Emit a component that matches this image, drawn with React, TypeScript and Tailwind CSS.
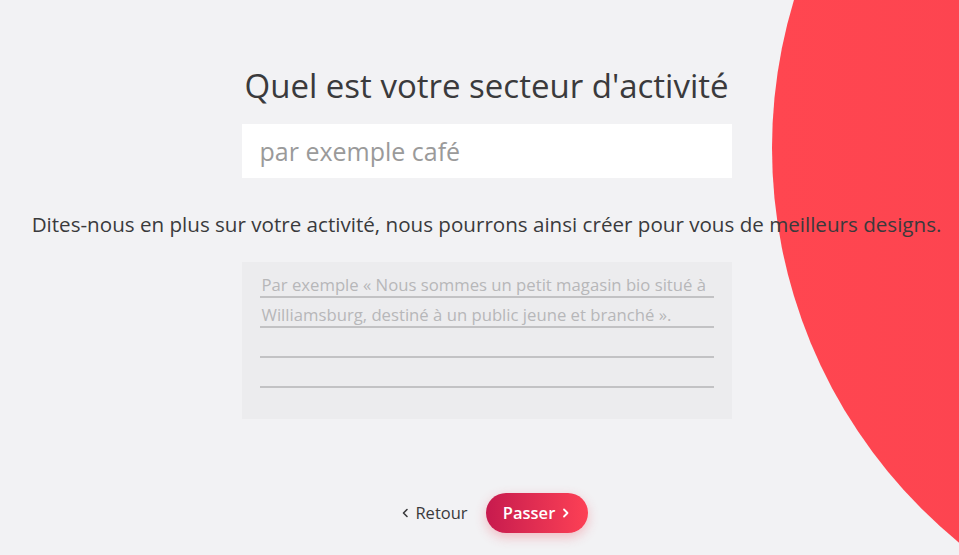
import React from "react";

export default function App() {
  return (
    <div
      className="relative w-[959px] h-[555px] overflow-hidden bg-[#f2f2f4] text-[#3b3b3d]"
      style={{ fontFamily: "'Open Sans', Lato, sans-serif" }}
    >
      <div className="absolute left-[772px] top-[-362px] w-[1020px] h-[1020px] rounded-full bg-gradient-to-r from-[#ff4650] to-[#f43d50]" />
      <div className="relative flex flex-col items-center pl-[14px]">
        <h1 className="mt-[66px] text-[33px] leading-[40px] font-normal text-[#3a3a3c]">
          Quel est votre secteur d'activité
        </h1>
        <div className="mt-[18px] w-[490px] h-[54px] bg-white flex items-center px-[18px]">
          <span className="text-[25px] leading-[30px] text-[#9a9a9a]">par exemple café</span>
        </div>
        <p className="mt-[33px] text-[20.6px] leading-[26px] text-[#3a3a3c] whitespace-nowrap">
          Dites-nous en plus sur votre activité, nous pourrons ainsi créer pour vous de meilleurs designs.
        </p>
        <div className="mt-[25px] w-[490px] h-[157px] bg-[#ececee] px-[18px] pt-[6px]">
          {[
            "Par exemple « Nous sommes un petit magasin bio situé à",
            "Williamsburg, destiné à un public jeune et branché ».",
            "",
            "",
          ].map((t, i) => (
            <div
              key={i}
              className="h-[30px] border-b-2 border-[#c2c2c4] text-[16.7px] leading-[24px] pt-[5px] text-[#b7b7b9] pl-[2px] whitespace-nowrap overflow-hidden"
            >
              {t}
            </div>
          ))}
        </div>
        <div className="mt-[74px] flex items-center gap-[18px] pl-[16px]">
          <span className="flex items-center gap-[6px] text-[16.5px] text-[#3a3a3c]">
            <svg width="8" height="10" viewBox="0 0 8 10" fill="none">
              <path d="M6 1.5L2.5 5L6 8.5" stroke="#3a3a3c" strokeWidth="1.6" strokeLinecap="round" strokeLinejoin="round" />
            </svg>
            Retour
          </span>
          <button className="h-[40px] w-[102px] rounded-full bg-gradient-to-r from-[#c71a4e] to-[#fd4055] text-white text-[16.5px] font-semibold flex items-center justify-center gap-[7px] shadow-[0_4px_12px_rgba(240,60,80,0.3)]">
            Passer
            <svg width="8" height="10" viewBox="0 0 8 10" fill="none">
              <path d="M2 1.5L5.5 5L2 8.5" stroke="white" strokeWidth="1.8" strokeLinecap="round" strokeLinejoin="round" />
            </svg>
          </button>
        </div>
      </div>
    </div>
  );
}
